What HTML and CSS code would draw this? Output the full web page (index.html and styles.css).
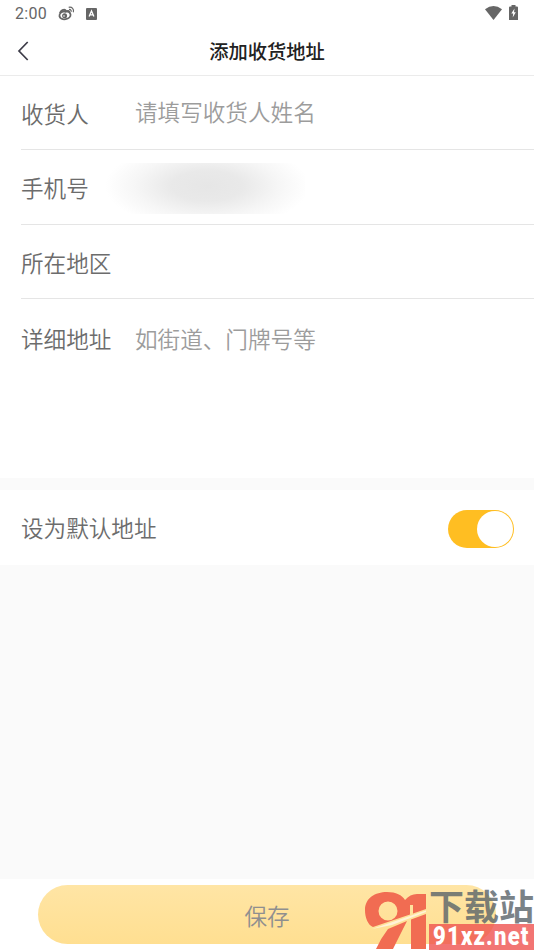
FILE: index.html
```html
<!DOCTYPE html>
<html lang="zh-CN">
<head>
<meta charset="utf-8">
<title>添加收货地址</title>
<link rel="stylesheet" href="styles.css">
</head>
<body>
<div class="screen">
  <div class="status">
    <span class="time">2:00</span>
    <svg class="weibo" width="17" height="15" viewBox="0 0 17 15" fill="none" stroke="#666">
      <ellipse cx="7" cy="9.3" rx="5.6" ry="3.9" stroke-width="1.8" transform="rotate(-10 7 9.3)"/>
      <path d="M1.800 7.500C3 4.500 6 2.800 7.300 4.200L7.500 5.500Q11 4 11.600 6.500" stroke-width="2"/>
      <circle cx="6.600" cy="9.700" r="2.500" fill="#666" stroke="none"/>
      <circle cx="6" cy="10" r=".8" fill="#fff" stroke="none"/>
      <path d="M10.700 1.300C14 .5 16.300 3.200 15.300 6.200M11 3.500C12.600 3.200 13.600 4.500 13.100 5.800" stroke-width="1.200"/>
    </svg>
    <svg class="ime" width="11" height="12" viewBox="0 0 11 12">
      <rect width="11" height="12" rx="1" fill="#666"/>
      <path d="M3.100 8.500L5.500 3L7.900 8.500M4 6.800H7" fill="none" stroke="#fff" stroke-width="1.300"/>
    </svg>
    <svg class="wifi" width="17" height="14" viewBox="0 0 17 14"><path d="M0 3.200Q8.500-3 17 3.200L8.500 14Z" fill="#666"/></svg>
    <svg class="battery" width="9" height="15" viewBox="0 0 9 15"><path d="M0 2.500Q0 1.500 1 1.500H2.500V0H6.500V1.500H8Q9 1.500 9 2.500V15H0Z" fill="#666"/><path d="M5.500 3.500L2.300 8.500H4.200L3.700 12.500L6.800 7.300H5Z" fill="#fff"/></svg>
  </div>
  <header class="nav">
    <svg class="back" width="12" height="20" viewBox="0 0 12 20" fill="none" stroke="#3c3b47" stroke-width="1.700"><path d="M10.700 1L2 10L10.700 19"/></svg>
    <h1>添加收货地址</h1>
  </header>
  <main>
    <section class="form">
      <div class="row name"><label>收货人</label><span class="hint">请填写收货人姓名</span></div>
      <div class="row phone"><label>手机号</label><span class="masked"></span></div>
      <div class="row area"><label>所在地区</label></div>
      <div class="row detail"><label>详细地址</label><span class="hint">如街道、门牌号等</span></div>
    </section>
    <section class="default"><label>设为默认地址</label><span class="toggle"><i></i></span></section>
  </main>
  <footer>
    <button class="save">保存</button>
    <div class="brand">
      <svg width="64" height="60" viewBox="0 0 64 60" fill="#f16c52">
        <path fill-rule="evenodd" d="M1 21C1 9 11 3 23 3C32 3 38 6 41 11Q46 5 53 5H62V20L49 24.500V16H46V25.500L9 38C4 36 1 29 1 21ZM14.500 22A9.500 9.500 0 0 0 33.500 22A9.500 9.500 0 0 0 14.500 22Z"/>
        <path d="M24 40L43 32Q37 44 29 60H12Q17 49 24 40ZM47 30.500L62 25V60H47Z"/>
        <path d="M8 40L62 21.500V23L28 36Z" fill="#fff3d8"/>
      </svg>
      <div class="words"><span class="cn">下载站</span><span class="domain"><b>91xz.net</b></span></div>
    </div>
  </footer>
</div>
</body>
</html>
```
FILE: styles.css
```css
* { box-sizing: border-box; }
body { margin: 0; font-family: "Noto Sans CJK SC", sans-serif; background: #fafafa; }
.screen { width: 534px; height: 950px; display: flex; flex-direction: column; overflow: hidden; }
.status { height: 28px; background: #fff; display: flex; align-items: flex-start; padding: 0 15px; }
.time { font: 16px/28px Roboto, sans-serif; color: #666; width: 43px; letter-spacing: .3px; }
.weibo { margin-top: 6px; }
.ime { margin: 8px 0 0 11px; }
.wifi { margin: 6px 0 0 auto; }
.battery { margin: 5px 1px 0 7px; }
.nav { height: 48px; background: #fff; border-bottom: 1px solid #ebebeb; display: flex; align-items: center; padding: 0 0 2px 17px; }
.nav h1 { flex: 1; margin: 0 29px 0 0; text-align: center; font-size: 19.3px; font-weight: 500; line-height: 28px; color: #222; }
main { flex: 1; }
.form { height: 402px; background: #fff; padding-left: 21px; margin-bottom: 12px; }
.row { height: 75px; display: flex; align-items: center; border-bottom: 1px solid #e5e5e5; }
.name, .area { height: 74px; }
label, .hint { font-size: 22.600px; font-weight: 350; line-height: 34px; white-space: nowrap; padding-top: 2px; }
label { width: 114px; color: #6c6c6c; }
.hint { color: #9c9c9c; }
.name .hint { margin-top: -4px; }
.detail { border: 0; height: 78px; }
.masked { width: 204px; height: 51px; margin: 3px 0 0 -34px; background: radial-gradient(ellipse 50% 85% at 52% 45%, #e6e6e6 0%, #e9e9e9 35%, #f6f6f6 70%, #fff 100%); }
.default { height: 75px; background: #fff; display: flex; align-items: center; justify-content: space-between; padding: 0 20px 0 21px; }
.default label { width: auto; padding-top: 0; }
.toggle { width: 66px; height: 38px; background: #ffbe22; border-radius: 19px; padding: 1px; display: flex; justify-content: flex-end; margin-top: 3px; }
.toggle i { width: 36px; height: 36px; border-radius: 50%; background: #fff; }
footer { position: relative; height: 71px; background: #fff; padding: 6px 38px; }
.save { width: 100%; height: 59px; border: 0; border-radius: 29.500px; background: linear-gradient(#ffe5a5, #ffdf91); font: 350 22.600px/34px "Noto Sans CJK SC", sans-serif; color: #8f8f8f; padding: 3px 0 0; }
.brand { position: absolute; left: 364px; top: 10px; display: flex; }
.words { width: 106px; margin-left: 1px; display: flex; flex-direction: column; }
.cn { height: 35px; font-size: 35px; line-height: 32px; font-weight: 700; color: #59646a; opacity: .8; white-space: nowrap; }
.domain { height: 26px; background: rgba(239, 83, 80, .8); color: #fff; padding-left: 4px; }
.domain b { display: block; font: 900 25px/26px Roboto, sans-serif; letter-spacing: 1.400px; transform: scaleX(.88); transform-origin: left; }
```
